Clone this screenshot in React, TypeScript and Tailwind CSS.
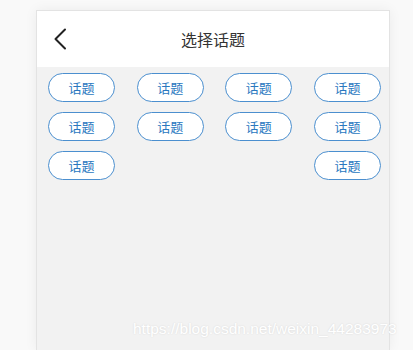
import React from "react";

export default function App() {
  const items = Array.from({ length: 10 });
  return (
    <div
      className="relative w-[413px] h-[350px] overflow-hidden bg-[#f9f9f9]"
      style={{ fontFamily: '"Noto Sans CJK SC", "Noto Sans", sans-serif' }}
    >
      <div className="ml-[36px] mt-[10px] w-[354px] h-[340px] border border-[#e3e3e3] border-b-0 bg-[#f2f2f2] shadow-[0_0_12px_rgba(0,0,0,0.06)] flex flex-col">
        <div className="relative h-[56px] bg-white flex items-center justify-center shrink-0">
          <svg
            className="absolute left-[16px] top-[17px]"
            width="14"
            height="22"
            viewBox="0 0 14 22"
            fill="none"
          >
            <path d="M12 1.5 L2.5 11 L12 20.5" stroke="#222" strokeWidth="2" strokeLinecap="round" strokeLinejoin="round" />
          </svg>
          <span className="text-[16px] text-[#333] leading-none">选择话题</span>
        </div>
        <div className="pl-[11px] pr-[8px] pt-[6px] flex flex-wrap justify-between gap-y-[10px]">
          {items.map((_, i) => (
            <div
              key={i}
              className="w-[67px] h-[29px] rounded-full border border-[#4b8fcf] bg-white flex items-center justify-center text-[13px] text-[#2a78bf] leading-none"
            >
              话题
            </div>
          ))}
        </div>
      </div>
      <div
        className="absolute left-[133px] top-[321px] text-[15.5px] text-white leading-none [text-shadow:0_0_2px_rgba(0,0,0,0.12)]"
        style={{ fontFamily: '"Liberation Sans", Arial, sans-serif' }}
      >
        https://blog.csdn.net/weixin_44283973
      </div>
    </div>
  );
}
